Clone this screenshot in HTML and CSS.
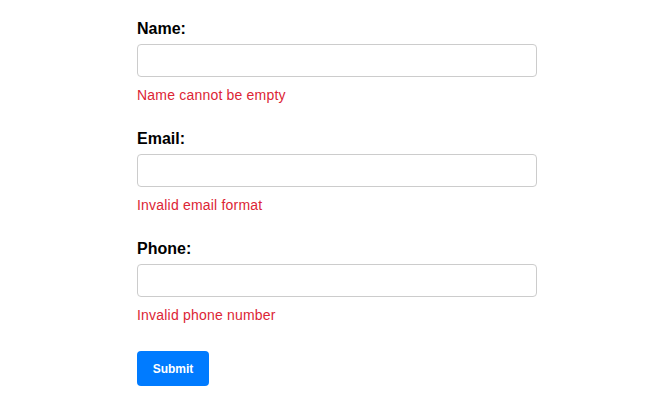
FILE: index.html
```html
<!DOCTYPE html>
<html lang="en">
<head>
<meta charset="utf-8">
<title>Form</title>
<link rel="stylesheet" href="styles.css">
</head>
<body>
<div class="page">
  <form class="form" onsubmit="return false">
    <div class="group">
      <label class="label" for="name">Name:</label>
      <input class="input" id="name" type="text">
      <div class="error">Name cannot be empty</div>
    </div>
    <div class="group">
      <label class="label" for="email">Email:</label>
      <input class="input" id="email" type="text">
      <div class="error">Invalid email format</div>
    </div>
    <div class="group">
      <label class="label" for="phone">Phone:</label>
      <input class="input" id="phone" type="text">
      <div class="error">Invalid phone number</div>
    </div>
    <button class="submit" type="submit">Submit</button>
  </form>
</div>
</body>
</html>
```
FILE: styles.css
```css
html, body {
  margin: 0;
  padding: 0;
  background: #ffffff;
}
body {
  font-family: "Liberation Sans", Arial, sans-serif;
}
.page {
  display: flex;
  justify-content: flex-start;
  padding: 20px 0 0 137px;
}
.form {
  width: 400px;
  display: flex;
  flex-direction: column;
}
.group {
  display: flex;
  flex-direction: column;
  margin-bottom: 27px;
}
.label {
  font-size: 16px;
  font-weight: bold;
  line-height: 18px;
  color: #000;
  margin-bottom: 6px;
}
.input {
  box-sizing: border-box;
  width: 400px;
  height: 33px;
  margin: 0;
  padding: 6px 8px;
  border: 1px solid #cccccc;
  border-radius: 4px;
  font-size: 14px;
  font-family: inherit;
  background: #fff;
}
.error {
  margin-top: 10px;
  font-size: 14px;
  line-height: 16px;
  letter-spacing: 0.2px;
  color: #dc2535;
}
.submit {
  align-self: flex-start;
  box-sizing: border-box;
  width: 72px;
  height: 35px;
  margin-top: 1px;
  padding: 0;
  border: none;
  border-radius: 4px;
  background: #007bff;
  color: #fff;
  font-family: inherit;
  font-size: 12px;
  font-weight: bold;
  cursor: pointer;
}
```
